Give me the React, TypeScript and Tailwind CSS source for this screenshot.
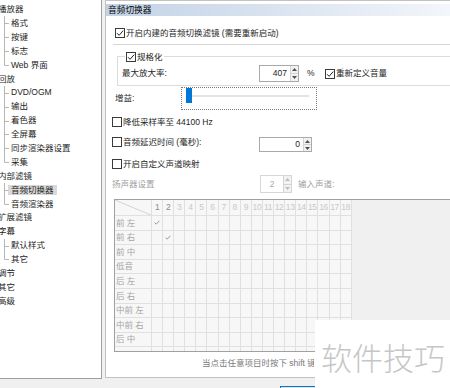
import React from "react";

type TreeItem = { t: string; lvl: number; last?: boolean; sel?: boolean };

const tree: TreeItem[] = [
  { t: "播放器", lvl: 0 },
  { t: "格式", lvl: 1 },
  { t: "按键", lvl: 1 },
  { t: "标志", lvl: 1 },
  { t: "Web 界面", lvl: 1, last: true },
  { t: "回放", lvl: 0 },
  { t: "DVD/OGM", lvl: 1 },
  { t: "输出", lvl: 1 },
  { t: "着色器", lvl: 1 },
  { t: "全屏幕", lvl: 1 },
  { t: "同步渲染器设置", lvl: 1 },
  { t: "采集", lvl: 1, last: true },
  { t: "内部滤镜", lvl: 0 },
  { t: "音频切换器", lvl: 1, sel: true },
  { t: "音频渲染器", lvl: 1, last: true },
  { t: "扩展滤镜", lvl: 0 },
  { t: "字幕", lvl: 0 },
  { t: "默认样式", lvl: 1 },
  { t: "其它", lvl: 1, last: true },
  { t: "调节", lvl: 0 },
  { t: "其它", lvl: 0 },
  { t: "高级", lvl: 0 },
];

const speakers = ["前 左", "前 右", "前 中", "低音", "后 左", "后 右", "中前 左", "中前 右", "后 中", ""];
const channels = Array.from({ length: 18 }, (_, i) => i + 1);

function Check({ checked }: { checked?: boolean }) {
  return (
    <svg width="10" height="10" viewBox="0 0 10 10" className="shrink-0">
      <rect x="0.5" y="0.5" width="9" height="9" fill="#fff" stroke="#3a3a3a" />
      {checked && <path d="M2 5.2 L4.1 7.3 L8.2 2.6" fill="none" stroke="#222" strokeWidth="1" />}
    </svg>
  );
}

function Arrow({ up, color }: { up?: boolean; color: string }) {
  return (
    <svg width="5" height="3" viewBox="0 0 5 3">
      <path d={up ? "M0 3 L2.5 0 L5 3Z" : "M0 0 L5 0 L2.5 3Z"} fill={color} />
    </svg>
  );
}

function Spin({
  value,
  className,
  disabled,
  center,
}: {
  value: string;
  className: string;
  disabled?: boolean;
  center?: boolean;
}) {
  return (
    <div
      className={`flex shrink-0 border bg-white ${className} ${
        disabled ? "border-[#d6d6d6] text-[#a8a8a8]" : "border-[#a9a9a9] text-[#1e1e1e]"
      }`}
    >
      <div className={`flex flex-1 items-center ${center ? "justify-center" : "justify-end pr-[3px]"}`}>
        {value}
      </div>
      <div className="flex w-[8px] flex-col border-l border-[#d4d4d4] bg-[#f2f2f2]">
        <div className="flex flex-1 items-center justify-center border-b border-[#d4d4d4]">
          <Arrow up color={disabled ? "#bdbdbd" : "#505050"} />
        </div>
        <div className="flex flex-1 items-center justify-center">
          <Arrow color={disabled ? "#bdbdbd" : "#505050"} />
        </div>
      </div>
    </div>
  );
}

function TreeRow({ item }: { item: TreeItem }) {
  if (item.lvl === 0) {
    return (
      <div className="flex h-[13.9px] items-center">
        <span className="-ml-[2px] whitespace-nowrap">{item.t}</span>
      </div>
    );
  }
  return (
    <div className="flex h-[13.9px] items-center">
      <svg width="10" height="14" viewBox="0 0 10 14" className="h-[13.9px] shrink-0">
        <path d={item.last ? "M4.5 0V7.5H9" : "M4.5 0V14M4.5 7.5H9"} stroke="#b4b4b4" fill="none" />
      </svg>
      <span
        className={`-ml-[2px] flex h-[10px] items-center whitespace-nowrap px-[3px] ${
          item.sel ? "bg-[#d9d9d9]" : ""
        }`}
      >
        {item.t}
      </span>
    </div>
  );
}

function SmallTick() {
  return (
    <svg width="6" height="5" viewBox="0 0 6 5">
      <path d="M0.6 2.6 L2.2 4.2 L5.4 0.8" fill="none" stroke="#8f8f8f" strokeWidth="0.9" />
    </svg>
  );
}

function ChannelGrid() {
  return (
    <div className="ml-[8px] mr-[-20px] mt-[6px] h-[153px] shrink-0 overflow-hidden border-b border-l border-t border-[#a0a0a0] bg-[#f0f0f0]">
      <div className="grid w-max grid-cols-[37px_repeat(18,11.1px)] grid-rows-[16px] auto-rows-[14.6px] bg-[#f7f7f7]">
        <div className="border-b border-r border-[#e0e0e0]">
          <svg width="36" height="15" viewBox="0 0 36 15" className="block">
            <path d="M0 0 L36 15" stroke="#d4d4d4" />
          </svg>
        </div>
        {channels.map((c) => (
          <div
            key={c}
            className={`flex items-center justify-center border-b border-r border-[#e0e0e0] tracking-[-0.4px] ${
              c <= 2 ? "text-[#8a8a8a]" : "text-[#c9c9c9]"
            }`}
          >
            {c}
          </div>
        ))}
        {speakers.map((s, r) => (
          <React.Fragment key={r}>
            <div className="flex items-center whitespace-nowrap border-b border-r border-[#e0e0e0] pl-[1px] text-[#a6a6a6]">
              {s}
            </div>
            {channels.map((c) => (
              <div key={c} className="flex items-center justify-center border-b border-r border-[#e0e0e0]">
                {r + 1 === c && r < 2 ? <SmallTick /> : null}
              </div>
            ))}
          </React.Fragment>
        ))}
      </div>
    </div>
  );
}

export default function App() {
  return (
    <div className="relative flex h-[388px] w-[450px] overflow-hidden bg-[#f0f0f0] font-['Liberation_Sans','Noto_Sans_CJK_SC',sans-serif] text-[8.5px] leading-none text-[#1e1e1e]">
      {/* options tree */}
      <div className="h-[379px] w-[102px] shrink-0 overflow-hidden border-b border-r border-[#a0a0a0] bg-white pt-[2.4px]">
        {tree.map((item, i) => (
          <TreeRow key={i} item={item} />
        ))}
      </div>

      <div className="ml-[3px] flex min-w-0 flex-1 flex-col">
        <div className="flex h-[378px] shrink-0 flex-col overflow-hidden border-b border-l border-t border-[#c2c2c2] bg-white">
          <div className="mt-[3px] flex h-[12px] shrink-0 items-center bg-linear-to-r from-[#c2d2e6] to-[#f3f6fa] pl-[2px] text-[8.7px] text-black">
            音频切换器
          </div>

          <div className="ml-[9px] mt-[11px] flex h-[12px] shrink-0 items-center gap-[1px]">
            <Check checked />
            <span className="whitespace-nowrap">开启内建的音频切换滤镜 (需要重新启动)</span>
          </div>

          <div className="ml-[7px] mt-[5px] h-[1px] shrink-0 bg-[#d6d6d6]" />

          {/* normalize group */}
          <div className="ml-[11px] mr-[-10px] mt-[11px] flex h-[30px] shrink-0 flex-col border border-[#dcdcdc]">
            <div className="-mt-[5px] ml-[7px] flex h-[10px] w-fit items-center gap-[1px] bg-white px-[1px]">
              <Check checked />
              <span className="whitespace-nowrap">规格化</span>
            </div>
            <div className="mt-[3px] flex h-[17px] items-center">
              <span className="ml-[4px] w-[137px] whitespace-nowrap">最大放大率:</span>
              <Spin value="407" className="h-[17px] w-[40px]" />
              <span className="w-[26px] pl-[8px]">%</span>
              <Check checked />
              <span className="ml-[1px] whitespace-nowrap">重新定义音量</span>
            </div>
          </div>

          {/* boost slider */}
          <div className="mt-[1px] flex h-[23px] shrink-0">
            <span className="ml-[9px] flex w-[66px] items-center">增益:</span>
            <div className="flex h-[23px] w-[136px] items-start border border-dotted border-[#7a7a7a]">
              <div className="ml-[4px] h-[15px] w-[6px] bg-[#0078d7]" />
              <div className="mt-[7px] h-[2px] w-[117px] bg-[#e3e3e3]" />
            </div>
          </div>

          <div className="ml-[6px] mt-[6px] flex h-[12px] shrink-0 items-center gap-[1px]">
            <Check />
            <span className="whitespace-nowrap">降低采样率至 44100 Hz</span>
          </div>

          <div className="ml-[6px] mt-[8px] flex h-[17px] shrink-0 items-start">
            <div className="flex h-[12px] w-[147px] items-center gap-[1px]">
              <Check />
              <span className="whitespace-nowrap">音频延迟时间 (毫秒):</span>
            </div>
            <Spin value="0" className="mt-[1px] h-[15px] w-[53px]" />
          </div>

          <div className="ml-[6px] mt-[5px] flex h-[12px] shrink-0 items-center gap-[1px]">
            <Check />
            <span className="whitespace-nowrap">开启自定义声道映射</span>
          </div>

          <div className="ml-[6px] mt-[5px] flex h-[18px] shrink-0 items-center">
            <span className="w-[148px] whitespace-nowrap text-[#a0a0a0]">扬声器设置</span>
            <Spin value="2" className="h-[18px] w-[32px]" disabled center />
            <span className="ml-[6px] whitespace-nowrap text-[#a0a0a0]">输入声道:</span>
          </div>

          <ChannelGrid />

          {/* note text, right part sits under the watermark */}
          <div className="ml-[96px] mt-[5px] flex h-[12px] w-[112px] shrink-0 items-center overflow-hidden whitespace-nowrap text-[#7a7a7a]">
            当点击任意项目时按下 shift 键可以同时设置所有声道
          </div>
        </div>

        <div className="ml-[175px] mt-[8px] h-[23px] w-[75px] shrink-0 border border-[#0078d7] bg-[#e1e1e1]" />
      </div>

      {/* watermark overlay */}
      <div className="absolute left-[315px] top-[320px] h-[70px] w-[140px] bg-white pl-[6px] pt-[20px] font-['Noto_Sans_CJK_SC',sans-serif] text-[31px] font-light leading-[34px] text-[#c6c6c6]">
        软件技巧
      </div>
    </div>
  );
}
